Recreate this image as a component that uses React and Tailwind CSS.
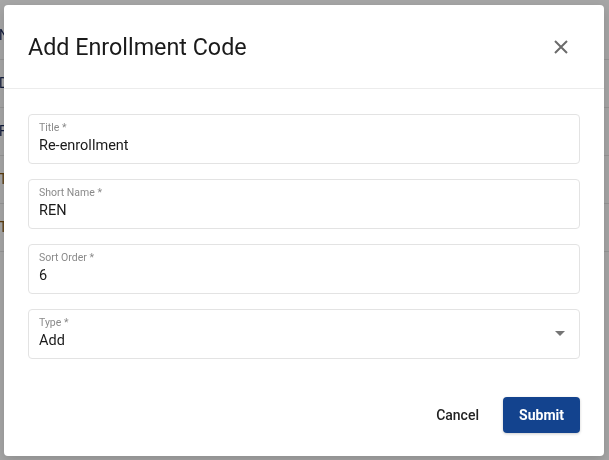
import React from "react";

const rows = [
  { t: "Name", c: "text-[#1b2a5c]" },
  { t: "Description", c: "text-[#1b2a5c]" },
  { t: "Fall", c: "text-[#1b2a5c]" },
  { t: "Transfer", c: "text-[#8a5a12]" },
  { t: "Transfer", c: "text-[#8a5a12]" },
];

function Field({ label, value, select }) {
  return (
    <div className="relative h-[50px] rounded-[4px] border border-[#e3e3e3] pl-[10px] pt-[6px]">
      <div className="text-[10.5px] leading-[13px] text-[#8a8a8a]">{label}</div>
      <div className="text-[14.5px] leading-[20px] text-[#1a1a1a] mt-[2px]">{value}</div>
      {select && (
        <svg className="absolute right-[14px] top-[21px]" width="10" height="5" viewBox="0 0 10 5">
          <path d="M0 0 L10 0 L5 5 Z" fill="#757575" />
        </svg>
      )}
    </div>
  );
}

export default function App() {
  return (
    <div className="relative w-[609px] h-[460px] overflow-hidden bg-white" style={{ fontFamily: "Roboto, 'Noto Sans', sans-serif" }}>
      <div className="flex flex-col w-full">
        {rows.map((r, i) => (
          <div key={i} className={`h-[48px] flex items-center border-b border-[#e6e6e6] text-[14px] ${i === 0 ? "mt-[12px]" : ""}`}>
            <div className={`w-[4px] overflow-hidden whitespace-nowrap ${r.c}`}>
              <span className="ml-[-1px]">{r.t}</span>
            </div>
          </div>
        ))}
      </div>
      <div className="absolute inset-0 bg-[#a6a6a6] mix-blend-multiply"></div>
      <div className="absolute left-[4px] top-[5px] w-[600px] h-[451px] bg-white rounded-[4px] shadow-[0_4px_12px_rgba(0,0,0,0.15)] flex flex-col">
        <div className="h-[84px] flex items-center justify-between pl-[24px] pr-[36px] border-b border-[#ececec] pt-[1px]">
          <div className="text-[23.3px] text-[#1a1a1a]">Add Enrollment Code</div>
          <svg width="14" height="14" viewBox="0 0 14 14">
            <path d="M1 1 L13 13 M13 1 L1 13" stroke="#6b6b6b" strokeWidth="2" />
          </svg>
        </div>
        <div className="flex flex-col gap-[15px] px-[24px] pt-[25px]">
          <Field label="Title *" value="Re-enrollment" />
          <Field label="Short Name *" value="REN" />
          <Field label="Sort Order *" value="6" />
          <Field label="Type *" value="Add" select />
        </div>
        <div className="flex justify-end items-center gap-[24px] px-[24px] mt-[38px]">
          <button className="text-[14px] text-[#222] font-medium">Cancel</button>
          <button className="h-[36px] w-[77px] rounded-[4px] bg-[#13438e] text-white text-[14px] font-bold shadow-[0_1px_3px_rgba(0,0,0,0.2)]">Submit</button>
        </div>
      </div>
    </div>
  );
}
